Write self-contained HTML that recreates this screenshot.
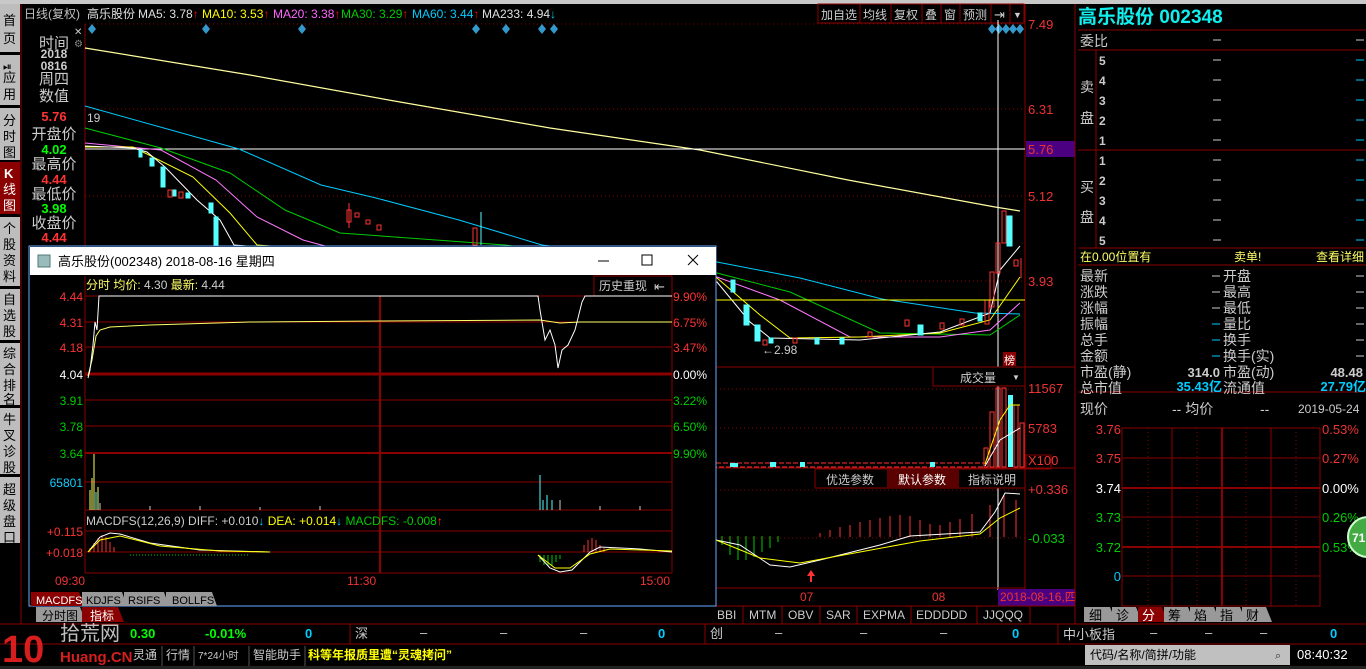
<!DOCTYPE html>
<html><head><meta charset="utf-8"><style>
html,body{margin:0;padding:0;background:#000;width:1366px;height:669px;overflow:hidden}
svg{display:block}
text{font-family:"Liberation Sans","Noto Sans CJK SC",sans-serif}
</style></head><body>
<svg width="1366" height="669" viewBox="0 0 1366 669" xmlns="http://www.w3.org/2000/svg">
<rect width="1366" height="669" fill="#000"/>
<rect x="0" y="0" width="1366" height="4" fill="#c8c8c8"/>
<!-- left sidebar -->
<g font-size="13" fill="#000">
<rect x="0" y="4" width="20" height="48" fill="#bdbdbd"/>
<rect x="0" y="55" width="20" height="50" fill="#bdbdbd"/>
<rect x="0" y="108" width="20" height="52" fill="#bdbdbd"/>
<rect x="0" y="162" width="20" height="52" fill="#8b0000"/>
<rect x="0" y="217" width="20" height="69" fill="#bdbdbd"/>
<rect x="0" y="289" width="20" height="51" fill="#bdbdbd"/>
<rect x="0" y="343" width="20" height="62" fill="#bdbdbd"/>
<rect x="0" y="408" width="20" height="66" fill="#bdbdbd"/>
<rect x="0" y="477" width="20" height="66" fill="#bdbdbd"/>
<text x="3" y="25">首</text><text x="3" y="43">页</text>
<text x="3" y="70" font-size="11">⏯</text><text x="3" y="82">应</text><text x="3" y="99">用</text>
<text x="3" y="125">分</text><text x="3" y="141">时</text><text x="3" y="157">图</text>
<text x="4" y="178" fill="#fff" font-weight="bold">K</text><text x="3" y="194" fill="#fff">线</text><text x="3" y="210" fill="#fff">图</text>
<text x="3" y="233">个</text><text x="3" y="249">股</text><text x="3" y="265">资</text><text x="3" y="281">料</text>
<text x="3" y="304">自</text><text x="3" y="320">选</text><text x="3" y="336">股</text>
<text x="3" y="358">综</text><text x="3" y="374">合</text><text x="3" y="390">排</text><text x="3" y="404">名</text>
<text x="3" y="424">牛</text><text x="3" y="440">叉</text><text x="3" y="456">诊</text><text x="3" y="472">股</text>
<text x="3" y="494">超</text><text x="3" y="510">级</text><text x="3" y="526">盘</text><text x="3" y="542">口</text>
</g>
<line x1="21" y1="4" x2="21" y2="624" stroke="#8b0000"/>
<!-- header -->
<g font-size="12">
<text x="24" y="18" fill="#c0c0c0">日线(复权)</text>
<text x="87" y="18" fill="#e0e0e0">高乐股份</text>
<text x="138" y="18" fill="#e0e0e0">MA5: 3.78<tspan fill="#f00">↑</tspan></text>
<text x="202" y="18" fill="#ff0">MA10: 3.53<tspan fill="#f00">↑</tspan></text>
<text x="273" y="18" fill="#f6f">MA20: 3.38<tspan fill="#f00">↑</tspan></text>
<text x="341" y="18" fill="#0c0">MA30: 3.29<tspan fill="#f00">↑</tspan></text>
<text x="412" y="18" fill="#0cf">MA60: 3.44<tspan fill="#f00">↑</tspan></text>
<text x="482" y="18" fill="#e0e0e0">MA233: 4.94<tspan fill="#0cf">↓</tspan></text>
</g>
<!-- toolbar -->
<g font-size="12" fill="#ccc" stroke="none">
<rect x="818" y="4" width="206" height="19" fill="#000" stroke="#8b0000"/>
<text x="821" y="19">加自选</text><text x="863" y="19">均线</text><text x="894" y="19">复权</text><text x="925" y="19">叠</text><text x="944" y="19">窗</text><text x="963" y="19">预测</text>
<text x="994" y="19" font-size="13">⇥</text><text x="1013" y="18" font-size="9">▼</text>
</g>
<g stroke="#8b0000"><line x1="860" y1="4" x2="860" y2="23"/><line x1="891" y1="4" x2="891" y2="23"/><line x1="922" y1="4" x2="922" y2="23"/><line x1="941" y1="4" x2="941" y2="23"/><line x1="960" y1="4" x2="960" y2="23"/><line x1="991" y1="4" x2="991" y2="23"/><line x1="1010" y1="4" x2="1010" y2="23"/></g>
<!-- main chart frame -->
<line x1="1025" y1="4" x2="1025" y2="606" stroke="#8b0000"/>
<line x1="85" y1="24" x2="85" y2="250" stroke="#8b0000"/>
<g stroke="#8b0000" stroke-dasharray="1,3">
<line x1="85" y1="24" x2="1025" y2="24"/><line x1="85" y1="109" x2="1025" y2="109"/><line x1="85" y1="196" x2="1025" y2="196"/><line x1="85" y1="281" x2="1025" y2="281"/>
<line x1="716" y1="389" x2="1025" y2="389"/><line x1="716" y1="428" x2="1025" y2="428"/>
<line x1="716" y1="490" x2="1025" y2="490"/><line x1="716" y1="538" x2="1025" y2="538"/>
</g>
<g fill="#e33" font-size="13">
<text x="1028" y="29">7.49</text><text x="1028" y="114">6.31</text><text x="1028" y="201">5.12</text><text x="1028" y="286">3.93</text>
<text x="1028" y="393">11567</text><text x="1028" y="433">5783</text><text x="1028" y="465">X100</text>
<text x="1028" y="494">+0.336</text><text x="1028" y="543" fill="#0c0">-0.033</text>
</g>
<rect x="1026" y="141" width="49" height="16" fill="#4b0082"/><text x="1028" y="154" fill="#e33" font-size="13">5.76</text>
<!-- diamonds -->
<g fill="#39c">
<path d="M92,24l4,5-4,5-4-5z"/><path d="M206,24l4,5-4,5-4-5z"/><path d="M302,24l4,5-4,5-4-5z"/><path d="M476,24l4,5-4,5-4-5z"/><path d="M506,24l4,5-4,5-4-5z"/><path d="M542,24l4,5-4,5-4-5z"/><path d="M554,24l4,5-4,5-4-5z"/>
<path d="M992,24l4,5-4,5-4-5z"/><path d="M999,24l4,5-4,5-4-5z"/><path d="M1006,24l4,5-4,5-4-5z"/><path d="M1013,24l4,5-4,5-4-5z"/><path d="M1020,24l4,5-4,5-4-5z"/>
</g>
<!-- MA233 -->
<polyline fill="none" stroke="#ffffa0" stroke-width="1.2" points="85,48 250,75 400,102 550,128 700,150 848,180 995,207 1020,211"/>
<line x1="85" y1="149" x2="1025" y2="149" stroke="#fff"/>
<line x1="998" y1="20" x2="998" y2="590" stroke="#fff"/>
<text x="87" y="122" fill="#ccc" font-size="12">19</text>
<polyline fill="none" stroke="#0cf" points="85,106 239,149 321,185 376,198 459,220 542,245 600,252 717,262 800,278 882,299 975,313 1020,314"/>
<polyline fill="none" stroke="#0c0" points="85,128 161,148 230,173 285,210 340,233 505,245 717,273 790,292 880,333 990,335 1020,315"/>
<polyline fill="none" stroke="#f7f" points="85,143 161,150 216,180 257,217 303,240 340,250 717,277 780,300 850,337 940,337 990,330 1020,303"/>
<polyline fill="none" stroke="#ff0" points="85,147 133,147 193,177 230,213 257,245 717,278 760,315 790,338 860,337 940,333 990,320 1020,277"/>
<polyline fill="none" stroke="#fff" points="85,146 133,148 147,152 165,167 197,200 220,220 234,245 717,282 750,322 770,338 860,340 940,332 990,313 1000,270 1020,246"/>
<!-- candles left -->
<g fill="#5ff" stroke="#5ff">
<rect x="139" y="150" width="3" height="7"/><rect x="150" y="158" width="4" height="8"/><rect x="161" y="167" width="4" height="20"/><rect x="172" y="190" width="4" height="6"/><rect x="186" y="193" width="4" height="5"/><rect x="209" y="203" width="4" height="10"/><rect x="214" y="217" width="4" height="28"/><line x1="481" y1="212" x2="481" y2="245"/>
</g>
<g fill="none" stroke="#f33">
<rect x="168" y="190" width="4" height="7"/><rect x="179" y="192" width="4" height="6"/><rect x="347" y="210" width="4" height="12"/><line x1="349" y1="203" x2="349" y2="228"/><rect x="355" y="213" width="4" height="4"/><rect x="366" y="220" width="4" height="4"/><rect x="377" y="225" width="4" height="5"/><rect x="473" y="228" width="4" height="17"/>
</g>
<!-- candles right area -->
<g fill="#5ff" stroke="#5ff">
<rect x="731" y="280" width="4" height="12"/><rect x="744" y="305" width="5" height="20"/><rect x="755" y="325" width="5" height="16"/><rect x="769" y="338" width="4" height="5"/><rect x="815" y="338" width="4" height="6"/><rect x="840" y="338" width="4" height="6"/><rect x="918" y="325" width="5" height="10"/><rect x="978" y="313" width="4" height="8"/><rect x="1007" y="216" width="5" height="30"/>
</g>
<g fill="none" stroke="#f33">
<rect x="763" y="340" width="4" height="5"/><rect x="793" y="338" width="4" height="5"/><rect x="868" y="332" width="4" height="5"/><rect x="905" y="320" width="4" height="6"/><rect x="940" y="323" width="4" height="6"/><rect x="960" y="319" width="4" height="6"/><rect x="985" y="300" width="4" height="24"/><rect x="990" y="272" width="4" height="35"/><rect x="996" y="243" width="4" height="30"/><rect x="1002" y="211" width="4" height="32"/><rect x="1014" y="260" width="4" height="6"/><line x1="1021" y1="258" x2="1021" y2="278"/>
</g>
<line x1="716" y1="300" x2="1025" y2="300" stroke="#ff0"/>
<text x="762" y="354" fill="#ccc" font-size="12">←2.98</text>
<rect x="1003" y="352" width="13" height="14" fill="#8b0000"/><text x="1004" y="364" fill="#fff" font-size="11">榜</text>
<!-- volume panel -->
<line x1="716" y1="367" x2="1075" y2="367" stroke="#8b0000"/>
<rect x="933" y="367" width="92" height="19" fill="#000" stroke="#8b0000"/>
<text x="960" y="382" fill="#ccc" font-size="12">成交量</text><text x="1012" y="380" fill="#ccc" font-size="8">▼</text>
<rect x="1026" y="455" width="25" height="14" fill="none" stroke="#8b0000"/>
<g fill="none" stroke="#f33">
<rect x="984" y="448" width="4" height="19"/><rect x="990" y="412" width="4" height="55"/><rect x="996" y="388" width="4" height="79"/><rect x="1002" y="388" width="4" height="79"/><rect x="1014" y="405" width="4" height="62"/><rect x="1020" y="423" width="4" height="44"/>
</g>
<rect x="1008" y="395" width="5" height="72" fill="#5ff"/>
<rect x="716" y="463" width="268" height="4" fill="none" stroke="#f33" stroke-dasharray="5,2"/>
<g fill="#5ff"><rect x="730" y="463" width="8" height="4"/><rect x="770" y="462" width="6" height="5"/><rect x="800" y="462" width="5" height="5"/><rect x="930" y="462" width="5" height="5"/></g>
<polyline fill="none" stroke="#ff0" points="985,464 1000,420 1010,405 1020,405"/>
<polyline fill="none" stroke="#fff" points="985,466 1000,440 1020,428"/>
<!-- macd panel -->
<line x1="716" y1="468" x2="1075" y2="468" stroke="#8b0000"/>
<rect x="815" y="469" width="210" height="19" fill="#000" stroke="#8b0000"/>
<rect x="887" y="469" width="72" height="19" fill="#5a0000"/>
<text x="826" y="484" fill="#ccc" font-size="12">优选参数</text><text x="898" y="484" fill="#fff" font-size="12">默认参数</text><text x="968" y="484" fill="#ccc" font-size="12">指标说明</text>
<g stroke="#0c0"><line x1="722" y1="536" x2="722" y2="545"/><line x1="730" y1="536" x2="730" y2="555"/><line x1="738" y1="536" x2="738" y2="560"/><line x1="746" y1="536" x2="746" y2="560"/><line x1="754" y1="536" x2="754" y2="557"/><line x1="762" y1="536" x2="762" y2="552"/><line x1="770" y1="536" x2="770" y2="548"/><line x1="778" y1="536" x2="778" y2="542"/></g>
<g stroke="#f33"><line x1="820" y1="537" x2="820" y2="533"/><line x1="830" y1="537" x2="830" y2="530"/><line x1="840" y1="537" x2="840" y2="527"/><line x1="850" y1="537" x2="850" y2="525"/><line x1="860" y1="537" x2="860" y2="522"/><line x1="870" y1="537" x2="870" y2="520"/><line x1="880" y1="537" x2="880" y2="518"/><line x1="890" y1="537" x2="890" y2="516"/><line x1="900" y1="537" x2="900" y2="515"/><line x1="910" y1="537" x2="910" y2="516"/><line x1="920" y1="537" x2="920" y2="520"/><line x1="930" y1="537" x2="930" y2="524"/><line x1="940" y1="537" x2="940" y2="525"/><line x1="950" y1="537" x2="950" y2="522"/><line x1="960" y1="537" x2="960" y2="519"/><line x1="972" y1="537" x2="972" y2="514"/><line x1="990" y1="537" x2="990" y2="505"/><line x1="1004" y1="537" x2="1004" y2="495"/><line x1="1016" y1="537" x2="1016" y2="500"/></g>
<polyline fill="none" stroke="#fff" points="716,540 740,545 770,565 790,567 820,560 880,545 910,536 980,532 995,512 1005,493 1020,494"/>
<polyline fill="none" stroke="#ff0" points="716,540 760,558 800,563 860,552 920,541 980,534 1000,518 1020,508"/>
<path d="M811,570l-4,6h3v6h2v-6h3z" fill="#f33"/>
<!-- date axis -->
<line x1="716" y1="588" x2="1025" y2="588" stroke="#8b0000"/>
<text x="800" y="601" fill="#e33" font-size="12">07</text><text x="932" y="601" fill="#e33" font-size="12">08</text>
<rect x="998" y="589" width="77" height="17" fill="#4b0082"/><text x="1000" y="601" fill="#e33" font-size="12">2018-08-16,四</text>
<line x1="716" y1="606" x2="1075" y2="606" stroke="#8b0000"/>
<g font-size="12" fill="#ccc">
<text x="717" y="619">BBI</text><text x="749" y="619">MTM</text><text x="788" y="619">OBV</text><text x="826" y="619">SAR</text><text x="863" y="619">EXPMA</text><text x="916" y="619">EDDDDD</text><text x="983" y="619">JJQQQ</text>
</g>
<g stroke="#8b0000"><line x1="743" y1="606" x2="743" y2="624"/><line x1="782" y1="606" x2="782" y2="624"/><line x1="820" y1="606" x2="820" y2="624"/><line x1="857" y1="606" x2="857" y2="624"/><line x1="911" y1="606" x2="911" y2="624"/><line x1="977" y1="606" x2="977" y2="624"/><line x1="1030" y1="606" x2="1030" y2="624"/></g>
<!-- left info -->
<g font-size="15" fill="#ccc" text-anchor="middle">
<text x="54" y="48">时间</text><text x="54" y="58" font-size="12" font-weight="bold">2018</text><text x="54" y="70" font-size="12" font-weight="bold">0816</text><text x="54" y="84">周四</text><text x="54" y="101">数值</text>
<text x="54" y="121" fill="#f33" font-weight="bold" font-size="13">5.76</text><text x="54" y="139">开盘价</text>
<text x="54" y="154" fill="#0f0" font-weight="bold" font-size="13">4.02</text><text x="54" y="169">最高价</text>
<text x="54" y="184" fill="#f33" font-weight="bold" font-size="13">4.44</text><text x="54" y="199">最低价</text>
<text x="54" y="213" fill="#0f0" font-weight="bold" font-size="13">3.98</text><text x="54" y="228">收盘价</text>
<text x="54" y="242" fill="#f33" font-weight="bold" font-size="13">4.44</text>
</g>
<text x="74" y="35" fill="#ccc" font-size="10">✕</text><text x="74" y="47" fill="#888" font-size="10">⚙</text>
<!-- right panel -->
<line x1="1075" y1="4" x2="1075" y2="624" stroke="#8b0000"/>
<text x="1078" y="23" fill="#1ee" font-size="19" font-weight="bold">高乐股份 002348</text>
<g stroke="#8b0000" fill="none">
<line x1="1078" y1="30" x2="1366" y2="30"/><line x1="1078" y1="50" x2="1366" y2="50"/><line x1="1078" y1="150" x2="1366" y2="150"/><line x1="1078" y1="248" x2="1366" y2="248"/><line x1="1078" y1="265" x2="1366" y2="265"/><line x1="1078" y1="392" x2="1366" y2="392"/>
<line x1="1096" y1="50" x2="1096" y2="248"/>
</g>
<g font-size="14" fill="#ccc">
<text x="1080" y="46">委比</text><text x="1080" y="92">卖</text><text x="1080" y="123">盘</text><text x="1080" y="192">买</text><text x="1080" y="222">盘</text>
</g>
<g font-size="12" fill="#ccc" font-weight="bold">
<text x="1099" y="65">5</text><text x="1099" y="85">4</text><text x="1099" y="105">3</text><text x="1099" y="125">2</text><text x="1099" y="145">1</text>
<text x="1099" y="165">1</text><text x="1099" y="185">2</text><text x="1099" y="205">3</text><text x="1099" y="225">4</text><text x="1099" y="245">5</text>
</g>
<g stroke="#ccc"><line x1="1213" y1="40" x2="1221" y2="40"/><line x1="1356" y1="40" x2="1364" y2="40"/>
<line x1="1213" y1="60" x2="1221" y2="60"/><line x1="1213" y1="80" x2="1221" y2="80"/><line x1="1213" y1="100" x2="1221" y2="100"/><line x1="1213" y1="120" x2="1221" y2="120"/><line x1="1213" y1="140" x2="1221" y2="140"/><line x1="1213" y1="160" x2="1221" y2="160"/><line x1="1213" y1="180" x2="1221" y2="180"/><line x1="1213" y1="200" x2="1221" y2="200"/><line x1="1213" y1="220" x2="1221" y2="220"/><line x1="1213" y1="240" x2="1221" y2="240"/></g>
<g stroke="#0cf"><line x1="1356" y1="60" x2="1364" y2="60"/><line x1="1356" y1="80" x2="1364" y2="80"/><line x1="1356" y1="100" x2="1364" y2="100"/><line x1="1356" y1="120" x2="1364" y2="120"/><line x1="1356" y1="140" x2="1364" y2="140"/><line x1="1356" y1="160" x2="1364" y2="160"/><line x1="1356" y1="180" x2="1364" y2="180"/><line x1="1356" y1="200" x2="1364" y2="200"/><line x1="1356" y1="220" x2="1364" y2="220"/><line x1="1356" y1="240" x2="1364" y2="240"/></g>
<g font-size="12" fill="#ff6"><text x="1080" y="261">在0.00位置有</text><text x="1234" y="261">卖单!</text><text x="1316" y="261">查看详细</text></g>
<g font-size="14" fill="#ccc">
<text x="1080" y="281">最新</text><text x="1080" y="297">涨跌</text><text x="1080" y="313">涨幅</text><text x="1080" y="329">振幅</text><text x="1080" y="345">总手</text><text x="1080" y="361">金额</text><text x="1080" y="377">市盈(静)</text><text x="1080" y="393">总市值</text>
<text x="1223" y="281">开盘</text><text x="1223" y="297">最高</text><text x="1223" y="313">最低</text><text x="1223" y="329">量比</text><text x="1223" y="345">换手</text><text x="1223" y="361">换手(实)</text><text x="1223" y="377">市盈(动)</text><text x="1223" y="393">流通值</text>
</g>
<g stroke="#ccc"><line x1="1212" y1="276" x2="1220" y2="276"/><line x1="1212" y1="292" x2="1220" y2="292"/><line x1="1212" y1="308" x2="1220" y2="308"/><line x1="1356" y1="276" x2="1364" y2="276"/><line x1="1356" y1="292" x2="1364" y2="292"/><line x1="1356" y1="308" x2="1364" y2="308"/><line x1="1356" y1="324" x2="1364" y2="324"/><line x1="1356" y1="340" x2="1364" y2="340"/><line x1="1356" y1="356" x2="1364" y2="356"/></g>
<g stroke="#0cf"><line x1="1212" y1="324" x2="1220" y2="324"/><line x1="1212" y1="340" x2="1220" y2="340"/><line x1="1212" y1="356" x2="1220" y2="356"/></g>
<g font-size="13" font-weight="bold" text-anchor="end">
<text x="1220" y="377" fill="#ccc">314.0</text><text x="1363" y="377" fill="#ccc">48.48</text>
<text x="1222" y="391" fill="#0cf">35.43亿</text><text x="1366" y="391" fill="#0cf">27.79亿</text>
</g>
<g font-size="14" fill="#ccc"><text x="1080" y="414">现价</text><text x="1172" y="414">-- 均价</text><text x="1260" y="414">--</text><text x="1298" y="413" font-size="12">2019-05-24</text></g>
<!-- mini chart -->
<g stroke="#8b0000" fill="none">
<rect x="1122" y="428" width="198" height="178"/>
<line x1="1122" y1="458" x2="1320" y2="458"/><line x1="1122" y1="488" x2="1320" y2="488" stroke-width="2"/><line x1="1122" y1="517" x2="1320" y2="517"/><line x1="1122" y1="547" x2="1320" y2="547" stroke-width="2"/><line x1="1122" y1="576" x2="1320" y2="576"/>
<line x1="1172" y1="428" x2="1172" y2="606"/><line x1="1222" y1="428" x2="1222" y2="606" stroke-width="2"/><line x1="1271" y1="428" x2="1271" y2="606"/>
<g stroke-dasharray="1,3"><line x1="1148" y1="428" x2="1148" y2="606"/><line x1="1197" y1="428" x2="1197" y2="606"/><line x1="1246" y1="428" x2="1246" y2="606"/><line x1="1296" y1="428" x2="1296" y2="606"/></g>
</g>
<g font-size="13" text-anchor="end">
<text x="1121" y="434" fill="#e33">3.76</text><text x="1121" y="463" fill="#e33">3.75</text><text x="1121" y="493" fill="#fff">3.74</text><text x="1121" y="522" fill="#0c0">3.73</text><text x="1121" y="552" fill="#0c0">3.72</text><text x="1121" y="581" fill="#0cf">0</text>
</g>
<g font-size="13"><text x="1322" y="434" fill="#e33">0.53%</text><text x="1322" y="463" fill="#e33">0.27%</text><text x="1322" y="493" fill="#fff">0.00%</text><text x="1322" y="522" fill="#0c0">0.26%</text><text x="1322" y="552" fill="#0c0">0.53%</text></g>
<circle cx="1368" cy="537" r="20" fill="#4a4" stroke="#cfc" stroke-width="2"/><text x="1352" y="542" fill="#fff" font-size="12" font-weight="bold">71</text>
<!-- right tabs -->
<g font-size="13" fill="#000">
<path d="M1084,607h26l6,15h-32z" fill="#999"/><path d="M1112,607h24l6,15h-30z" fill="#999"/><path d="M1138,607h24l6,15h-30z" fill="#8b0000"/><path d="M1164,607h24l6,15h-30z" fill="#999"/><path d="M1190,607h24l6,15h-30z" fill="#999"/><path d="M1216,607h24l6,15h-30z" fill="#999"/><path d="M1242,607h24l6,15h-30z" fill="#999"/>
<text x="1089" y="620">细</text><text x="1116" y="620">诊</text><text x="1142" y="620" fill="#fff">分</text><text x="1168" y="620">筹</text><text x="1194" y="620">焰</text><text x="1220" y="620">指</text><text x="1246" y="620">财</text>
</g>
<!-- popup -->
<rect x="29" y="246" width="687" height="360" fill="#000" stroke="#6af"/>
<rect x="30" y="247" width="686" height="28" fill="#fff"/>
<rect x="38" y="255" width="12" height="12" fill="#9bb" stroke="#577"/>
<text x="58" y="266" fill="#000" font-size="13">高乐股份(002348) 2018-08-16 星期四</text>
<line x1="598" y1="261" x2="609" y2="261" stroke="#000"/>
<rect x="642" y="255" width="10" height="10" fill="none" stroke="#000"/>
<path d="M688,255l10,10M698,255l-10,10" stroke="#000"/>
<g stroke="#8b0000">
<line x1="85" y1="296" x2="672" y2="296"/><line x1="85" y1="322" x2="672" y2="322"/><line x1="85" y1="347" x2="672" y2="347"/><line x1="85" y1="374" x2="672" y2="374" stroke-width="3"/><line x1="85" y1="400" x2="672" y2="400"/><line x1="85" y1="426" x2="672" y2="426"/><line x1="85" y1="453" x2="672" y2="453" stroke-width="2"/><line x1="85" y1="482" x2="672" y2="482"/><line x1="85" y1="510" x2="672" y2="510"/><line x1="85" y1="531" x2="672" y2="531"/><line x1="85" y1="552" x2="672" y2="552"/><line x1="85" y1="573" x2="672" y2="573"/>
<line x1="85" y1="276" x2="85" y2="573"/><line x1="672" y1="276" x2="672" y2="573"/><line x1="380" y1="296" x2="380" y2="573" stroke-width="2"/>
</g>
<g font-size="12" fill="#ff6"><text x="86" y="289">分时 均价: <tspan fill="#ccc">4.30</tspan> 最新: <tspan fill="#ccc">4.44</tspan></text></g>
<rect x="594" y="276" width="78" height="20" fill="#000" stroke="#8b0000"/><text x="599" y="290" fill="#ccc" font-size="12">历史重现</text><text x="654" y="291" fill="#ccc" font-size="13">⇤</text>
<g font-size="12" text-anchor="end">
<text x="83" y="301" fill="#f33">4.44</text><text x="83" y="327" fill="#f33">4.31</text><text x="83" y="352" fill="#f33">4.18</text><text x="83" y="379" fill="#fff">4.04</text><text x="83" y="405" fill="#0c0">3.91</text><text x="83" y="431" fill="#0c0">3.78</text><text x="83" y="458" fill="#0c0">3.64</text><text x="83" y="487" fill="#1cf">65801</text>
<text x="83" y="536" fill="#f33">+0.115</text><text x="83" y="557" fill="#f33">+0.018</text>
</g>
<g font-size="12"><text x="673" y="301" fill="#f33">9.90%</text><text x="673" y="327" fill="#f33">6.75%</text><text x="673" y="352" fill="#f33">3.47%</text><text x="673" y="379" fill="#fff">0.00%</text><text x="673" y="405" fill="#0c0">3.22%</text><text x="673" y="431" fill="#0c0">6.50%</text><text x="673" y="458" fill="#0c0">9.90%</text></g>
<polyline fill="none" stroke="#ff6" points="88,376 92,360 96,336 100,330 110,327 150,325 250,322 380,321 540,320 560,323 580,322 672,322"/>
<polyline fill="none" stroke="#fff" points="88,378 90,370 93,345 95,322 97,330 99,296 538,296 540,310 545,340 550,330 555,345 558,368 562,350 568,345 575,330 582,302 585,296 672,296"/>
<g stroke="#ff6"><line x1="90" y1="510" x2="90" y2="490"/><line x1="92" y1="510" x2="92" y2="478"/><line x1="94" y1="510" x2="94" y2="454"/><line x1="98" y1="510" x2="98" y2="487"/></g>
<g stroke="#5ff"><line x1="96" y1="510" x2="96" y2="492"/><line x1="540" y1="510" x2="540" y2="475"/><line x1="543" y1="510" x2="543" y2="500"/><line x1="547" y1="510" x2="547" y2="495"/><line x1="552" y1="510" x2="552" y2="500"/></g>
<g stroke="#ccc"><line x1="100" y1="510" x2="100" y2="503"/><line x1="150" y1="510" x2="150" y2="506"/><line x1="200" y1="510" x2="200" y2="506"/><line x1="260" y1="510" x2="260" y2="507"/><line x1="320" y1="510" x2="320" y2="506"/><line x1="560" y1="510" x2="560" y2="500"/><line x1="600" y1="510" x2="600" y2="506"/><line x1="640" y1="510" x2="640" y2="506"/></g>
<g font-size="12"><text x="86" y="525" fill="#ccc">MACDFS(12,26,9) DIFF: +0.010<tspan fill="#0cf">↓</tspan> <tspan fill="#ff0">DEA: +0.014</tspan><tspan fill="#0cf">↓</tspan> <tspan fill="#0c0">MACDFS: -0.008</tspan><tspan fill="#f33">↑</tspan></text></g>
<g stroke="#f33"><line x1="90" y1="552" x2="90" y2="548"/><line x1="94" y1="552" x2="94" y2="543"/><line x1="98" y1="552" x2="98" y2="538"/><line x1="102" y1="552" x2="102" y2="535"/><line x1="106" y1="552" x2="106" y2="537"/><line x1="110" y1="552" x2="110" y2="542"/><line x1="114" y1="552" x2="114" y2="547"/><line x1="584" y1="552" x2="584" y2="545"/><line x1="588" y1="552" x2="588" y2="540"/><line x1="592" y1="552" x2="592" y2="538"/><line x1="596" y1="552" x2="596" y2="540"/><line x1="600" y1="552" x2="600" y2="545"/><line x1="604" y1="552" x2="604" y2="548"/></g>
<g stroke="#0c0"><line x1="540" y1="555" x2="540" y2="562"/><line x1="544" y1="555" x2="544" y2="565"/><line x1="548" y1="555" x2="548" y2="566"/><line x1="552" y1="555" x2="552" y2="565"/><line x1="556" y1="555" x2="556" y2="562"/><line x1="560" y1="555" x2="560" y2="559"/></g>
<line x1="130" y1="555" x2="250" y2="555" stroke="#0c0" stroke-dasharray="1,2"/>
<polyline fill="none" stroke="#fff" points="88,552 100,537 110,533 120,534 150,543 200,550 270,552"/>
<polyline fill="none" stroke="#ff0" points="88,552 100,540 120,536 160,546 220,551 270,552"/>
<polyline fill="none" stroke="#fff" points="538,555 550,568 560,572 572,570 590,552 600,547 640,549 672,552"/>
<polyline fill="none" stroke="#ff0" points="538,555 555,568 570,568 590,554 610,549 672,551"/>
<g font-size="12" fill="#e33"><text x="55" y="585">09:30</text><text x="347" y="585">11:30</text><text x="640" y="585">15:00</text></g>
<g font-size="11">
<path d="M31,592h48l6,14h-54z" fill="#8b0000"/><path d="M82,592h40l5,14h-45z" fill="#999"/><path d="M124,592h40l5,14h-45z" fill="#999"/><path d="M166,592h46l5,14h-51z" fill="#999"/>
<text x="36" y="604" fill="#fff">MACDFS</text><text x="86" y="604" fill="#000">KDJFS</text><text x="128" y="604" fill="#000">RSIFS</text><text x="172" y="604" fill="#000">BOLLFS</text>
</g>
<path d="M36,607h44l6,15h-50z" fill="#999"/><path d="M82,607h36l6,15h-42z" fill="#8b0000"/>
<text x="42" y="620" font-size="12" fill="#000">分时图</text><text x="90" y="620" font-size="12" fill="#fff">指标</text>
<!-- bottom index row -->
<line x1="0" y1="624" x2="1366" y2="624" stroke="#8b0000"/>
<line x1="0" y1="644" x2="1366" y2="644" stroke="#8b0000"/>
<g font-size="13">
<text x="130" y="638" fill="#0f0" font-weight="bold">0.30</text><text x="205" y="638" fill="#0f0" font-weight="bold">-0.01%</text><text x="305" y="638" fill="#0cf" font-weight="bold">0</text>
<text x="355" y="638" fill="#ccc">深</text><text x="420" y="637" fill="#ccc">–</text><text x="500" y="637" fill="#ccc">–</text><text x="580" y="637" fill="#ccc">–</text><text x="658" y="638" fill="#0cf" font-weight="bold">0</text>
<text x="710" y="638" fill="#ccc">创</text><text x="775" y="637" fill="#ccc">–</text><text x="860" y="637" fill="#ccc">–</text><text x="940" y="637" fill="#ccc">–</text><text x="1012" y="638" fill="#0cf" font-weight="bold">0</text>
<text x="1063" y="639" fill="#ccc">中小板指</text><text x="1150" y="637" fill="#ccc">–</text><text x="1205" y="637" fill="#ccc">–</text><text x="1260" y="637" fill="#ccc">–</text><text x="1330" y="638" fill="#0cf" font-weight="bold">0</text>
</g>
<g stroke="#8b0000"><line x1="350" y1="624" x2="350" y2="644"/><line x1="705" y1="624" x2="705" y2="644"/><line x1="1058" y1="624" x2="1058" y2="644"/></g>
<!-- bottom bar -->
<g font-size="12" fill="#ccc">
<text x="133" y="659">灵通</text><text x="166" y="659">行情</text><text x="198" y="659" font-size="10">7*24小时</text><text x="253" y="659">智能助手</text>
</g>
<g stroke="#555"><line x1="162" y1="646" x2="162" y2="666"/><line x1="194" y1="646" x2="194" y2="666"/><line x1="249" y1="646" x2="249" y2="666"/><line x1="305" y1="646" x2="305" y2="666"/></g>
<text x="308" y="659" fill="#ff0" font-size="12" font-weight="bold">科等年报质里遭“灵魂拷问”</text>
<rect x="1085" y="645" width="205" height="20" fill="#c0c0c0"/>
<text x="1090" y="659" fill="#000" font-size="12">代码/名称/简拼/功能</text><text x="1275" y="659" fill="#333" font-size="11">⌕</text>
<text x="1297" y="659" fill="#fff" font-size="13">08:40:32</text>
<rect x="0" y="666" width="1366" height="3" fill="#222"/>
<!-- logo watermark -->
<g>
<text x="2" y="662" fill="#e22" font-size="38" font-weight="bold" opacity="0.9">10</text>
<text x="60" y="640" fill="#eee" font-size="20" opacity="0.8">拾荒网</text>
<text x="60" y="662" fill="#e22" font-size="15" font-weight="bold" opacity="0.9">Huang.CN</text>
</g>
</svg>
</body></html>
